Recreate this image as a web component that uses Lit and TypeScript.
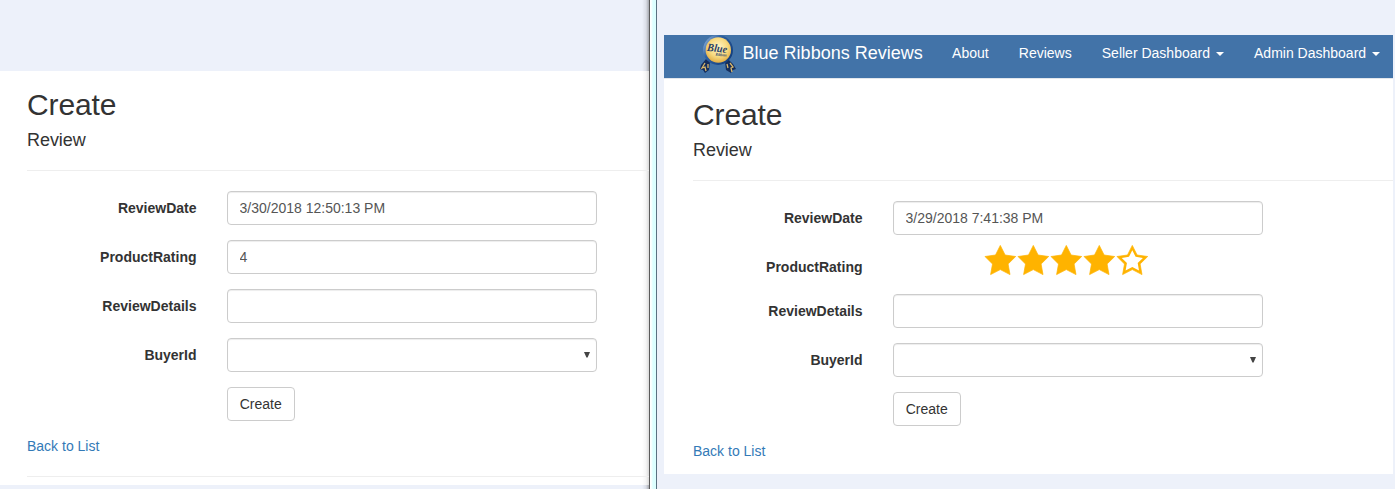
import { LitElement, html, css, svg, nothing } from "lit";
import { customElement, property } from "lit/decorators.js";

const STAR = "M15.3 .4L20.1 10l10.6 1.5-7.6 7.5 1.9 10.6-9.7-5-9.7 5 1.9-10.6L0 11.5 10.5 10z";

@customElement("star-rating")
export class StarRating extends LitElement {
  @property({ type: Number }) value = 0;

  static styles = css`
    :host { display: flex; gap: 2px; height: 29px; margin: -5px 0 5px 92.3px; }
    .star { display: block; width: 31px; height: 30px; flex: none; overflow: visible; fill: #ffb300; }
    .body { stroke: #ffb300; stroke-width: 0.7px; stroke-linejoin: round; }
    .hole { fill: #fff; }
  `;

  render() {
    return [1, 2, 3, 4, 5].map(
      (n) => html`<svg class="star" viewBox="0 0 31 30">
        <path class="body" d=${STAR}></path>
        ${n > this.value
          ? svg`<path class="hole" d=${STAR} transform="translate(15.3 16) scale(.69) translate(-15.3 -16)"></path>`
          : nothing}
      </svg>`
    );
  }
}

@customElement("review-form")
export class ReviewForm extends LitElement {
  @property() date = "";
  @property({ type: Number }) rating = 0;
  @property({ type: Boolean }) stars = false;

  static styles = css`
    * { box-sizing: border-box; }
    :host { display: block; }
    .title { margin: 0; padding-top: 1px; height: 43px; font-size: 30px; font-weight: 400; line-height: 33px; letter-spacing: -0.1px; }
    .subtitle { margin: 0; font-size: 18px; font-weight: 400; line-height: 20px; letter-spacing: -0.05px; }
    .rule { margin: 20px 0; border: 0; border-top: 1px solid #eee; }
    .row { display: grid; grid-template-columns: 170px 370px; column-gap: 30px; margin-bottom: 15px; align-items: start; }
    .label { padding: 7px 0.5px 0 0; height: 27px; text-align: right; font-weight: 700; }
    .input {
      display: flex; align-items: center; justify-content: space-between;
      width: 100%; height: 34px; padding: 0 11.5px; border: 1px solid #ccc; border-radius: 4px;
      background: #fff; color: #555; box-shadow: inset 0 1px 1px rgba(0, 0, 0, 0.075);
      font: inherit; outline: none;
    }
    .select { justify-content: flex-end; padding-right: 6px; }
    .arrow { display: block; width: 6px; height: 6px; fill: #444; margin-top: -1px; }
    .button {
      grid-column: 2; justify-self: start; width: 68px; height: 34px; padding: 0 12px 0 11.5px; border: 1px solid #ccc;
      border-radius: 4px; background: #fff; color: #333; font: inherit;
    }
    .link { display: block; width: max-content; color: #337ab7; text-decoration: none; }
  `;

  render() {
    return html`
      <h2 class="title">Create</h2>
      <h4 class="subtitle">Review</h4>
      <hr class="rule" />
      <div class="row">
        <label class="label">ReviewDate</label>
        <input class="input" .value=${this.date} />
      </div>
      <div class="row">
        <label class="label">ProductRating</label>
        ${this.stars
          ? html`<star-rating .value=${this.rating}></star-rating>`
          : html`<input class="input" .value=${String(this.rating)} />`}
      </div>
      <div class="row">
        <label class="label">ReviewDetails</label>
        <input class="input" />
      </div>
      <div class="row">
        <label class="label">BuyerId</label>
        <div class="input select" role="combobox">
          <svg class="arrow" viewBox="0 0 6 6"><path d="M0 0h6L3.6 5.5H2.4z"></path></svg>
        </div>
      </div>
      <div class="row"><button class="button">Create</button></div>
      <a class="link">Back to List</a>
    `;
  }
}

@customElement("nav-bar")
export class NavBar extends LitElement {
  static styles = css`
    :host {
      display: flex; box-sizing: border-box; height: 44px; padding-left: 34px; overflow: hidden;
      background: #4273a8; border-bottom: 1px solid #e3e7ec; color: #fff; white-space: nowrap;
    }
    .logo { display: block; flex: none; width: 40px; height: 40px; }
    .brand { margin-left: 4.6px; width: 179.4px; font-size: 18px; line-height: 36px; }
    .item { display: flex; align-items: center; height: 36px; margin-left: 30.1px; font-size: 14px; }
    .caret { margin-left: 6px; margin-top: 2px; border-top: 4px solid #fff; border-left: 4px solid transparent; border-right: 4px solid transparent; }
    .script { font: italic bold 11px "Liberation Serif", serif; fill: #2a4068; }
    .small { font: italic bold 4.5px "Liberation Serif", serif; fill: #2a4068; }
  `;

  render() {
    return html`
      <svg class="logo" viewBox="0 0 40 40">
        <defs>
          <radialGradient id="gold" cx=".5" cy=".4" r=".6">
            <stop offset="0" stop-color="#fff5c8"></stop>
            <stop offset=".6" stop-color="#f8da80"></stop>
            <stop offset="1" stop-color="#e2ae45"></stop>
          </radialGradient>
          <linearGradient id="ring" x1="0" y1="0" x2="1" y2=".7">
            <stop offset="0" stop-color="#a5c4e4"></stop>
            <stop offset=".4" stop-color="#2f62a5"></stop>
            <stop offset="1" stop-color="#123d7c"></stop>
          </linearGradient>
        </defs>
        <path d="M8 24L3 30l-1 4 3 1 2 3 4-3 1-8zM30 24l5 5 3 5-3 1-2 3-5-3-1-8z" fill="#142d5b"></path>
        <path d="M7 28l-3 5 3-1 1 4M32 28l3 4-2 1 1 4M10 29v4M29 29l1 4" fill="none" stroke="#d8b76b" stroke-width="1.3"></path>
        <circle cx="20" cy="15" r="15" fill="url(#ring)"></circle>
        <circle cx="20.3" cy="15" r="12.7" fill="url(#gold)"></circle>
        <text class="script" x="9" y="17" textLength="20" lengthAdjust="spacingAndGlyphs" transform="rotate(7 20 15)">Blue</text>
        <text class="small" x="18" y="21" textLength="11" lengthAdjust="spacingAndGlyphs" transform="rotate(4 20 15)">Ribbons</text>
      </svg>
      <span class="brand">Blue Ribbons Reviews</span>
      <span class="item">About</span>
      <span class="item">Reviews</span>
      <span class="item">Seller Dashboard<i class="caret"></i></span>
      <span class="item">Admin Dashboard<i class="caret"></i></span>
    `;
  }
}

@customElement("app-root")
export class AppRoot extends LitElement {
  static styles = css`
    * { box-sizing: border-box; }
    :host {
      display: grid; grid-template-columns: 649px 8px 738px; height: 489px; overflow: hidden;
      background: #edf1fa; color: #333; font: 14px/20px "Liberation Sans", Arial, sans-serif;
    }
    .left {
      padding-top: 71px;
      background: linear-gradient(to right, rgba(0, 0, 0, 0) 642px, rgba(0, 0, 0, 0.08) 646px, rgba(0, 0, 0, 0.3) 649px);
    }
    .leftpage {
      height: 414px; padding: 16px 0 0 27px;
      background: linear-gradient(to right, rgba(0, 0, 0, 0) 642px, rgba(0, 0, 0, 0.04) 646px, rgba(0, 0, 0, 0.15) 649px), #fff;
    }
    .footrule { margin: 20px 0 0; border: 0; border-top: 1px solid #eee; }
    .divider { border-left: 1px solid #5b5b5b; border-right: 1px solid #5a7080; background: linear-gradient(to right, #fff 0, #fff 1px, #dcffff 3px); }
    .right { padding: 35px 2px 0 7px; }
    .rightpage { height: 395px; padding: 18px 0 0 29px; background: #fff; }
  `;

  render() {
    return html`
      <section class="left">
        <div class="leftpage">
          <review-form date="3/30/2018 12:50:13 PM" rating="4"></review-form>
          <hr class="footrule" />
        </div>
      </section>
      <div class="divider"></div>
      <section class="right">
        <nav-bar></nav-bar>
        <div class="rightpage">
          <review-form date="3/29/2018 7:41:38 PM" rating="4" stars></review-form>
        </div>
      </section>
    `;
  }
}
